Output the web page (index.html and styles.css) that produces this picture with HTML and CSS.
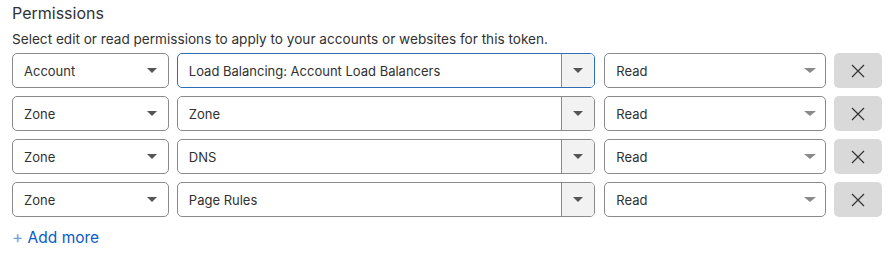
FILE: index.html
```html
<!DOCTYPE html>
<html lang="en">
<head>
<meta charset="utf-8"/>
<meta content="width=device-width, initial-scale=1.0" name="viewport"/>
<title>Permissions</title>
<link rel="stylesheet" href="styles.css">
</head>
<body>
    <section class="permissions">
        <h2 class="title">Permissions</h2>
        <p class="hint">Select edit or read permissions to apply to your accounts or websites for this token.</p>

        <div class="rows">
            <div class="row">
                <div class="select scope"><span>Account</span><i class="caret"></i></div>
                <div class="combo focused"><span>Load Balancing: Account Load Balancers</span><div class="combo-btn"><i class="caret"></i></div></div>
                <div class="select level"><span>Read</span><i class="caret light"></i></div>
                <button class="remove" type="button"><svg width="14" height="14" viewBox="0 0 14 14"><path d="M1 1 L13 13 M13 1 L1 13" stroke="#333" stroke-width="1.2"/></svg></button>
            </div>
            <div class="row">
                <div class="select scope"><span>Zone</span><i class="caret"></i></div>
                <div class="combo"><span>Zone</span><div class="combo-btn"><i class="caret"></i></div></div>
                <div class="select level"><span>Read</span><i class="caret light"></i></div>
                <button class="remove" type="button"><svg width="14" height="14" viewBox="0 0 14 14"><path d="M1 1 L13 13 M13 1 L1 13" stroke="#333" stroke-width="1.2"/></svg></button>
            </div>
            <div class="row">
                <div class="select scope"><span>Zone</span><i class="caret"></i></div>
                <div class="combo"><span>DNS</span><div class="combo-btn"><i class="caret"></i></div></div>
                <div class="select level"><span>Read</span><i class="caret light"></i></div>
                <button class="remove" type="button"><svg width="14" height="14" viewBox="0 0 14 14"><path d="M1 1 L13 13 M13 1 L1 13" stroke="#333" stroke-width="1.2"/></svg></button>
            </div>
            <div class="row">
                <div class="select scope"><span>Zone</span><i class="caret"></i></div>
                <div class="combo"><span>Page Rules</span><div class="combo-btn"><i class="caret"></i></div></div>
                <div class="select level"><span>Read</span><i class="caret light"></i></div>
                <button class="remove" type="button"><svg width="14" height="14" viewBox="0 0 14 14"><path d="M1 1 L13 13 M13 1 L1 13" stroke="#333" stroke-width="1.2"/></svg></button>
            </div>
        </div>

        <a class="add-more" href="#"><span class="plus">+</span> Add more</a>
    </section>
</body>
</html>
```

FILE: styles.css
```css
body {
    margin: 0;
    background-color: #ffffff;
    color: #313131;
    font-family: Inter, "Noto Sans", sans-serif;
}

.permissions {
    padding: 2px 12px 0 12px;
}

.title {
    margin: 0;
    font-size: 16px;
    font-weight: 400;
    line-height: 22px;
}

.hint {
    margin: 6px 0 5px 0;
    font-size: 13.6px;
    line-height: 18px;
}

/* rows of selects */
.rows {
    display: flex;
    flex-direction: column;
    gap: 8px;
}

.row {
    display: flex;
    gap: 8px;
    height: 35px;
}

.select, .combo {
    box-sizing: border-box;
    display: flex;
    align-items: center;
    border: 1px solid #8a8a8a;
    border-radius: 5px;
    font-size: 13px;
    background-color: #ffffff;
}

.select {
    justify-content: space-between;
    padding: 0 11px 0 11px;
}

.scope {
    width: 157px;
}

.combo {
    width: 419px;
    padding-left: 11px;
    overflow: hidden;
}

.combo span {
    flex: 1;
}

.combo.focused {
    border-color: #2e6db4;
}

.combo-btn {
    width: 32px;
    height: 100%;
    display: flex;
    align-items: center;
    justify-content: center;
    background-color: #f2f2f2;
    border-left: 1px solid #8a8a8a;
}

.level {
    width: 222px;
    margin-left: 1px;
    padding-right: 9px;
}

.caret {
    width: 0;
    height: 0;
    border-left: 5px solid transparent;
    border-right: 5px solid transparent;
    border-top: 5px solid #555555;
}

.caret.light {
    border-left-width: 6px;
    border-right-width: 6px;
    border-top-color: #8a8a8a;
}

.remove {
    width: 48px;
    height: 35px;
    border: none;
    border-radius: 5px;
    background-color: #d9d9d9;
    display: flex;
    align-items: center;
    justify-content: center;
    padding: 0;
}

.add-more {
    display: inline-block;
    margin-top: 10px;
    color: #0a5bc7;
    text-decoration: none;
    font-size: 15.5px;
}

.add-more .plus {
    color: #6f9fde;
    font-size: 17px;
}
```
